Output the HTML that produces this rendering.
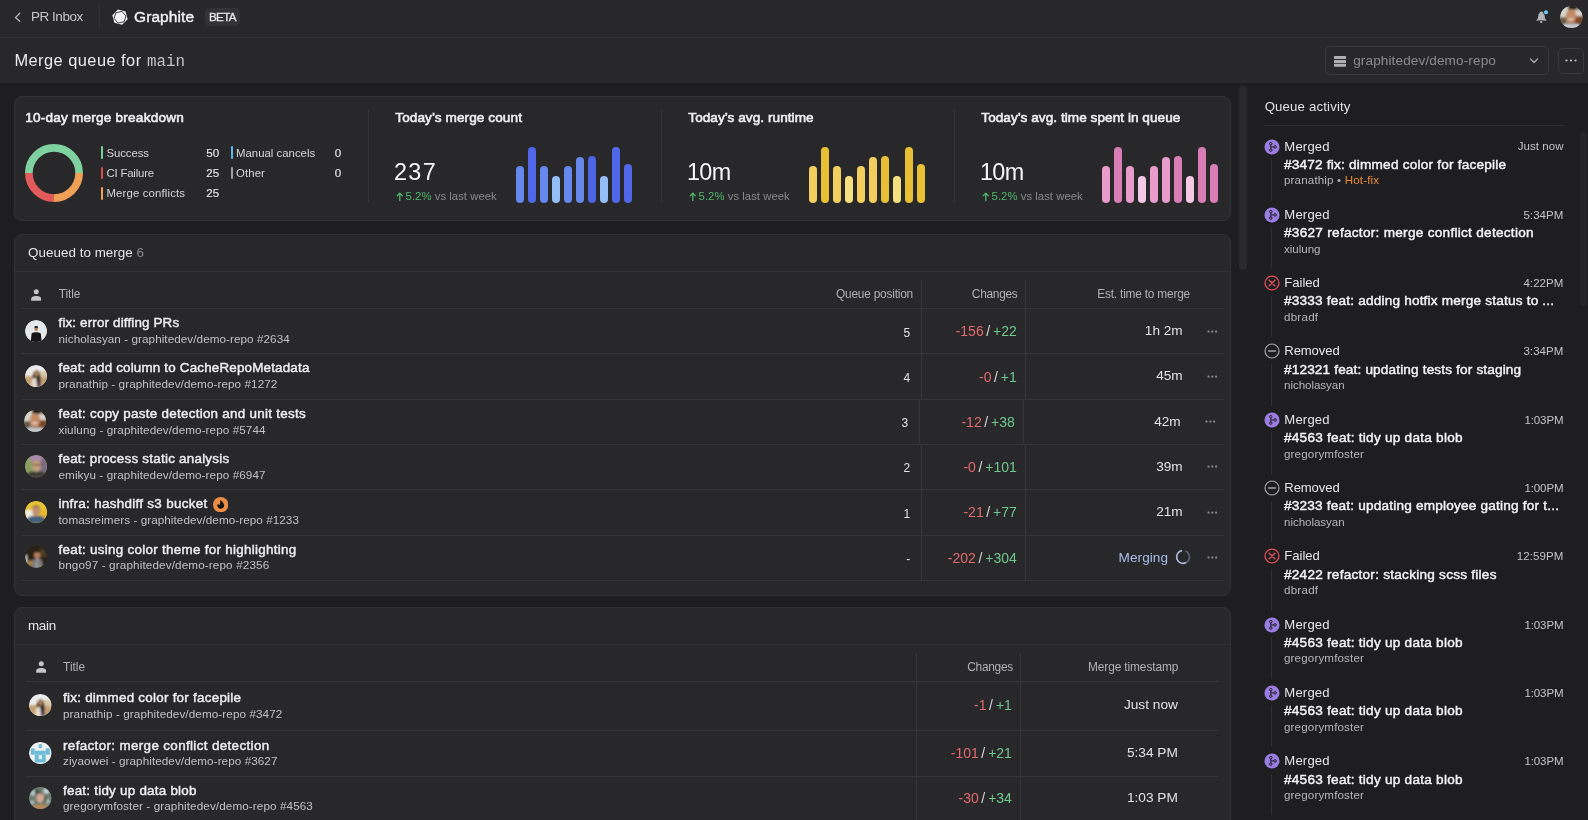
<!DOCTYPE html><html><head><meta charset="utf-8"><title>Merge queue</title><style>
*{box-sizing:border-box;margin:0;padding:0}
html,body{width:1588px;height:820px;overflow:hidden;background:#1e1e21;font-family:"Liberation Sans",sans-serif;color:#e6e6e6}
.a{position:absolute;white-space:nowrap}
.card{position:absolute;background:#28282b;border:1px solid #333337;border-radius:8px}
.vdiv{position:absolute;width:1px;background:#37373b}
.hl{position:absolute;height:1px;background:#353539}
.sb{color:#ededed;-webkit-text-stroke:0.45px #ededed}
.sub{color:#c2c2c6}
.colh{color:#b0b0b4}
.red{color:#e06a6c}.grn{color:#6dc98c}.sl{color:#d8d8d8}
.num{color:#e2e2e2}
.av{position:absolute;width:22px;height:22px;border-radius:50%;overflow:hidden}
.bar{position:absolute;width:8px;border-radius:4px}
</style></head><body><div id="root" style="position:absolute;left:0;top:0;width:1588px;height:820px;overflow:hidden;will-change:transform;background:#1e1e21">
<div class="a" style="left:0;top:0;width:1588px;height:37px;background:#28282b"></div>
<div class="a" style="left:0;top:37px;width:1588px;height:1px;background:#303034"></div>
<div class="a" style="left:0;top:38px;width:1588px;height:45px;background:#28282b"></div>
<svg class="a" style="left:13px;top:11px" width="10" height="12" viewBox="0 0 10 12"><path d="M6.8 2.2 L2.4 6.6 L6.8 10.2" fill="none" stroke="#b9b9bd" stroke-width="1.3" stroke-linecap="round" stroke-linejoin="round"/></svg>
<div class="a" style="left:30.9px;top:9.22px;line-height:16px;font-size:13.5px;letter-spacing:-0.454px;color:#c6c6ca">PR Inbox</div>
<div class="a" style="left:99px;top:5px;width:1px;height:24px;background:#333337"></div>
<svg class="a" style="left:110px;top:7px" width="20" height="20" viewBox="0 0 20 20"><polygon points="17.63,12.24 12.04,17.83 4.41,15.79 2.37,8.16 7.96,2.57 15.59,4.61" fill="#f4f4f4"/><polygon points="15.97,8.93 14.08,14.73 8.11,16.00 4.03,11.47 5.92,5.67 11.89,4.40" fill="none" stroke="#28282b" stroke-width="0.9"/></svg>
<div class="a" style="left:134px;top:8.13px;line-height:18px;font-size:15.5px;letter-spacing:0.081px;color:#f2f2f2;-webkit-text-stroke:0.4px #f2f2f2">Graphite</div>
<div class="a" style="left:205px;top:8px;width:35px;height:18px;border-radius:5px;background:#333336"></div>
<div class="a" style="left:208.9px;top:9.98px;line-height:14px;font-size:11.6px;letter-spacing:-0.605px;color:#e6e6e6;-webkit-text-stroke:0.3px #e6e6e6">BETA</div>
<svg class="a" style="left:1534px;top:9px" width="16" height="16" viewBox="0 0 16 16"><path d="M7.4 2.2 C5.2 3.2 4.3 5.2 4.2 7.4 C4.1 9.3 3.4 10.4 1.6 11.8 C4.8 10.9 9.6 10.9 12.8 12 C11.3 10.5 10.9 9 10.8 7.4 C10.6 4.8 9.6 3 7.4 2.2Z" fill="#b6b6ba"/><circle cx="7.2" cy="12.9" r="1.15" fill="#b6b6ba"/><circle cx="12" cy="3.3" r="2.7" fill="#28282b"/><circle cx="12" cy="3.3" r="2.05" fill="#6cc8f4"/></svg>
<div class="av" style="left:1560px;top:5.5px;width:22.5px;height:22.5px"><svg width="22.5" height="22.5" viewBox="0 0 22 22"><defs><clipPath id="c1"><circle cx="11" cy="11" r="11"/></clipPath><filter id="blr1" x="-20%" y="-20%" width="140%" height="140%"><feGaussianBlur stdDeviation="1.0"/></filter></defs><g clip-path="url(#c1)"><rect width="22.5" height="22.5" fill="#8a8070"/><g filter="url(#blr1)"><rect x="0" y="0" width="9" height="12" fill="#d6d6cc"/><rect x="8" y="-2" width="8" height="6" fill="#141210"/><rect x="14" y="4" width="10" height="7" fill="#d8d4cc"/><rect x="14" y="10" width="10" height="12" fill="#7a4424"/><rect x="0" y="11" width="6" height="8" fill="#6a5a40"/><ellipse cx="10.8" cy="10" rx="5.2" ry="7" fill="#c48a64"/><ellipse cx="10.5" cy="13" rx="3" ry="1.1" fill="#e8d0c0"/><path d="M0 22 C2 17 6 16.5 11 18 C16 16.5 20 17 22 22Z" fill="#c8ccd2"/></g></g></svg></div>
<div class="a" style="left:14.4px;top:51.12px;line-height:18px;font-size:16.4px;letter-spacing:0.461px;color:#ebebeb">Merge queue for</div>
<div class="a" style="left:147px;top:52.59px;line-height:18px;font-size:15.8px;letter-spacing:0.020px;font-family:'Liberation Mono',monospace;color:#c4c4c8">main</div>
<div class="a" style="left:1325px;top:46px;width:224px;height:29px;border:1px solid #3a3a3e;border-radius:5px"></div>
<svg class="a" style="left:1334px;top:55.5px" width="12" height="11" viewBox="0 0 12 11"><rect x="0" y="0" width="12" height="3" rx="0.6" fill="#b0b0b4"/><rect x="0" y="4" width="12" height="3" rx="0.6" fill="#b0b0b4"/><rect x="0" y="7.8" width="12" height="3" rx="0.6" fill="#b0b0b4"/></svg>
<div class="a" style="left:1353.2px;top:51.89px;line-height:17px;font-size:13.6px;letter-spacing:0.107px;color:#8c8c90">graphitedev/demo-repo</div>
<svg class="a" style="left:1529px;top:57px" width="10" height="8" viewBox="0 0 10 8"><path d="M1.5 2 L5 5.5 L8.5 2" fill="none" stroke="#a8a8ac" stroke-width="1.4" stroke-linecap="round" stroke-linejoin="round"/></svg>
<div class="a" style="left:1558px;top:48px;width:26px;height:26px;border:1px solid #3a3a3e;border-radius:5px"></div>
<svg class="a" style="left:1565px;top:58px" width="12" height="5" viewBox="0 0 12 5"><circle cx="1.5" cy="2.5" r="1.1" fill="#c0c0c4"/><circle cx="6" cy="2.5" r="1.1" fill="#c0c0c4"/><circle cx="10.5" cy="2.5" r="1.1" fill="#c0c0c4"/></svg>
<div class="a" style="left:1238.5px;top:86px;width:8px;height:184px;border-radius:4px;background:#2a2a2d"></div>
<div class="a" style="left:1580px;top:132px;width:7px;height:174px;border-radius:4px;background:#262629"></div>
<div class="card" style="left:14px;top:96px;width:1217px;height:125px"></div>
<div class="a sb" style="left:25.2px;top:110.39px;line-height:16px;font-size:13.6px;letter-spacing:0.211px;-webkit-text-stroke:0.6px #ededed">10-day merge breakdown</div>
<svg class="a" style="left:24px;top:143px" width="60" height="60" viewBox="0 0 60 60"><path d="M4.85 30 A25.15 25.15 0 0 1 55.15 30" fill="none" stroke="#7fd1a0" stroke-width="7.7"/><path d="M55.15 30 A25.15 25.15 0 0 1 30 55.15" fill="none" stroke="#eea055" stroke-width="7.7"/><path d="M30 55.15 A25.15 25.15 0 0 1 4.85 30" fill="none" stroke="#e35a5a" stroke-width="7.7"/></svg>
<div class="a" style="left:101.2px;top:146.30px;width:2.1px;height:12.7px;background:#72d09a;border-radius:1px"></div>
<div class="a" style="left:106.5px;top:145.85px;line-height:14px;font-size:11.4px;letter-spacing:-0.095px;color:#d6d6da">Success</div>
<div class="a" style="right:1368.90px;top:145.78px;line-height:14px;font-size:11.6px;color:#e2e2e6;-webkit-text-stroke:0.15px #e2e2e6">50</div>
<div class="a" style="left:101.2px;top:166.75px;width:2.1px;height:12.7px;background:#e04b4b;border-radius:1px"></div>
<div class="a" style="left:106.5px;top:166.00px;line-height:14px;font-size:11.4px;letter-spacing:-0.198px;color:#d6d6da">CI Failure</div>
<div class="a" style="right:1368.90px;top:165.93px;line-height:14px;font-size:11.6px;color:#e2e2e6;-webkit-text-stroke:0.15px #e2e2e6">25</div>
<div class="a" style="left:101.2px;top:187.20px;width:2.1px;height:12.7px;background:#efa052;border-radius:1px"></div>
<div class="a" style="left:106.5px;top:186.15px;line-height:14px;font-size:11.4px;letter-spacing:0.133px;color:#d6d6da">Merge conflicts</div>
<div class="a" style="right:1368.90px;top:186.08px;line-height:14px;font-size:11.6px;color:#e2e2e6;-webkit-text-stroke:0.15px #e2e2e6">25</div>
<div class="a" style="left:230.7px;top:146.30px;width:2.1px;height:12.7px;background:#5bb8e8;border-radius:1px"></div>
<div class="a" style="left:236.0px;top:145.85px;line-height:14px;font-size:11.4px;letter-spacing:0.003px;color:#d6d6da">Manual cancels</div>
<div class="a" style="right:1246.70px;top:145.78px;line-height:14px;font-size:11.6px;color:#e2e2e6;-webkit-text-stroke:0.15px #e2e2e6">0</div>
<div class="a" style="left:230.7px;top:166.75px;width:2.1px;height:12.7px;background:#a0a0a4;border-radius:1px"></div>
<div class="a" style="left:236.0px;top:166.00px;line-height:14px;font-size:11.4px;letter-spacing:0.100px;color:#d6d6da">Other</div>
<div class="a" style="right:1246.70px;top:165.93px;line-height:14px;font-size:11.6px;color:#e2e2e6;-webkit-text-stroke:0.15px #e2e2e6">0</div>
<div class="vdiv" style="left:368px;top:110px;height:92px;background:#333337"></div>
<div class="vdiv" style="left:661px;top:110px;height:92px;background:#333337"></div>
<div class="vdiv" style="left:954px;top:110px;height:92px;background:#333337"></div>
<div class="a sb" style="left:395.3px;top:110.39px;line-height:16px;font-size:13.6px;letter-spacing:0.080px;-webkit-text-stroke:0.6px #ededed">Today’s merge count</div>
<div class="a" style="left:394px;top:158.89px;line-height:26px;font-size:23.4px;letter-spacing:1.323px;color:#f4f4f4">237</div>
<svg class="a" style="left:396px;top:191.5px" width="8" height="9.5" viewBox="0 0 8 9.5"><path d="M3.8 9.2 V1.2 M0.9 4.1 L3.8 1.2 L6.7 4.1" fill="none" stroke="#4fb76b" stroke-width="1.3"/></svg>
<div class="a" style="left:405.6px;top:189.18px;line-height:14px;font-size:11.3px;letter-spacing:0.046px;"><span style="color:#4fb76b">5.2%</span> <span style="color:#8a8a8e">vs last week</span></div>
<div class="bar" style="left:516px;top:166px;height:37px;background:#6688ec"></div>
<div class="bar" style="left:528px;top:147px;height:56px;background:#4f67e8"></div>
<div class="bar" style="left:540px;top:166px;height:37px;background:#6688ec"></div>
<div class="bar" style="left:552px;top:176px;height:27px;background:#94bef8"></div>
<div class="bar" style="left:564px;top:166px;height:37px;background:#6688ec"></div>
<div class="bar" style="left:576px;top:157px;height:46px;background:#6688ec"></div>
<div class="bar" style="left:588px;top:156px;height:47px;background:#4c63e2"></div>
<div class="bar" style="left:600px;top:176px;height:27px;background:#94bef8"></div>
<div class="bar" style="left:612px;top:147px;height:56px;background:#4f67e8"></div>
<div class="bar" style="left:624px;top:164px;height:39px;background:#4f67e8"></div>
<div class="a sb" style="left:688.3px;top:110.39px;line-height:16px;font-size:13.6px;letter-spacing:0.044px;-webkit-text-stroke:0.6px #ededed">Today’s avg. runtime</div>
<div class="a" style="left:687px;top:158.89px;line-height:26px;font-size:23.4px;letter-spacing:-0.639px;color:#f4f4f4">10m</div>
<svg class="a" style="left:689px;top:191.5px" width="8" height="9.5" viewBox="0 0 8 9.5"><path d="M3.8 9.2 V1.2 M0.9 4.1 L3.8 1.2 L6.7 4.1" fill="none" stroke="#4fb76b" stroke-width="1.3"/></svg>
<div class="a" style="left:698.6px;top:189.18px;line-height:14px;font-size:11.3px;letter-spacing:0.046px;"><span style="color:#4fb76b">5.2%</span> <span style="color:#8a8a8e">vs last week</span></div>
<div class="bar" style="left:809px;top:166px;height:37px;background:#f3cd5e"></div>
<div class="bar" style="left:821px;top:147px;height:56px;background:#e8bf35"></div>
<div class="bar" style="left:833px;top:166px;height:37px;background:#f3cd5e"></div>
<div class="bar" style="left:845px;top:176px;height:27px;background:#f7e07e"></div>
<div class="bar" style="left:857px;top:166px;height:37px;background:#f3cd5e"></div>
<div class="bar" style="left:869px;top:157px;height:46px;background:#f3cd5e"></div>
<div class="bar" style="left:881px;top:156px;height:47px;background:#e8bf35"></div>
<div class="bar" style="left:893px;top:176px;height:27px;background:#f7e07e"></div>
<div class="bar" style="left:905px;top:147px;height:56px;background:#e8bf35"></div>
<div class="bar" style="left:917px;top:164px;height:39px;background:#e8bf35"></div>
<div class="a sb" style="left:981.3px;top:110.39px;line-height:16px;font-size:13.6px;letter-spacing:0.042px;-webkit-text-stroke:0.6px #ededed">Today’s avg. time spent in queue</div>
<div class="a" style="left:980px;top:158.89px;line-height:26px;font-size:23.4px;letter-spacing:-0.639px;color:#f4f4f4">10m</div>
<svg class="a" style="left:982px;top:191.5px" width="8" height="9.5" viewBox="0 0 8 9.5"><path d="M3.8 9.2 V1.2 M0.9 4.1 L3.8 1.2 L6.7 4.1" fill="none" stroke="#4fb76b" stroke-width="1.3"/></svg>
<div class="a" style="left:991.6px;top:189.18px;line-height:14px;font-size:11.3px;letter-spacing:0.046px;"><span style="color:#4fb76b">5.2%</span> <span style="color:#8a8a8e">vs last week</span></div>
<div class="bar" style="left:1102px;top:166px;height:37px;background:#e79ccb"></div>
<div class="bar" style="left:1114px;top:147px;height:56px;background:#d97db6"></div>
<div class="bar" style="left:1126px;top:166px;height:37px;background:#e79ccb"></div>
<div class="bar" style="left:1138px;top:176px;height:27px;background:#f5c9e6"></div>
<div class="bar" style="left:1150px;top:166px;height:37px;background:#e79ccb"></div>
<div class="bar" style="left:1162px;top:157px;height:46px;background:#e79ccb"></div>
<div class="bar" style="left:1174px;top:156px;height:47px;background:#d97db6"></div>
<div class="bar" style="left:1186px;top:176px;height:27px;background:#f5c9e6"></div>
<div class="bar" style="left:1198px;top:147px;height:56px;background:#d97db6"></div>
<div class="bar" style="left:1210px;top:164px;height:39px;background:#d97db6"></div>
<div class="card" style="left:14px;top:234px;width:1217px;height:362px"></div>
<div class="a" style="left:28.1px;top:244.76px;line-height:16px;font-size:13.4px;letter-spacing:0.030px;color:#e4e4e8">Queued to merge <span style="color:#88888c">6</span></div>
<div class="hl" style="left:15px;top:271px;width:1215px;background:#333337"></div>
<svg class="a" style="left:30.8px;top:288.5px" width="10.5" height="12" viewBox="0 0 10.5 12"><circle cx="5.25" cy="2.7" r="2.5" fill="#c4c4c8"/><path d="M0.2 11.7 L0.2 10 C0.2 7.6 2.5 6.9 5.25 6.9 C8 6.9 10.3 7.6 10.3 10 L10.3 11.7Z" fill="#c4c4c8"/></svg>
<div class="a colh" style="left:58.8px;top:287.08px;line-height:14px;font-size:11.9px;letter-spacing:-0.126px;">Title</div>
<div class="a colh" style="right:675.00px;top:287.08px;line-height:14px;font-size:11.9px;letter-spacing:-0.214px;">Queue position</div>
<div class="a colh" style="right:570.50px;top:287.08px;line-height:14px;font-size:11.9px;letter-spacing:-0.273px;">Changes</div>
<div class="a colh" style="right:398.00px;top:287.08px;line-height:14px;font-size:11.9px;letter-spacing:-0.210px;">Est. time to merge</div>
<div class="vdiv" style="left:921px;top:280px;height:28px"></div><div class="vdiv" style="left:1025px;top:280px;height:28px"></div>
<div class="hl" style="left:21px;top:308px;width:1203px"></div>
<div class="av" style="left:24.8px;top:319.5px;width:22.4px;height:22.4px"><svg width="22.4" height="22.4" viewBox="0 0 22 22"><defs><clipPath id="c2"><circle cx="11" cy="11" r="11"/></clipPath><filter id="blr2" x="-20%" y="-20%" width="140%" height="140%"><feGaussianBlur stdDeviation="0.6"/></filter></defs><g clip-path="url(#c2)"><rect width="22.4" height="22.4" fill="#e6e7e9"/><g filter="url(#blr2)"><ellipse cx="11" cy="8.6" rx="1.8" ry="2.2" fill="#b08868"/><ellipse cx="11" cy="7" rx="1.9" ry="1" fill="#201a18"/><path d="M5.5 22 L6.5 13.5 C7.5 11.5 14.5 11.5 15.5 13.5 L16.5 22Z" fill="#121212"/></g></g></svg></div>
<div class="a sb" style="left:58.5px;top:315.16px;line-height:16px;font-size:13.4px;letter-spacing:0.157px;">fix: error diffing PRs</div>
<div class="a sub" style="left:58.5px;top:331.95px;line-height:14px;font-size:11.7px;letter-spacing:0.063px;">nicholasyan - graphitedev/demo-repo #2634</div>
<div class="a num" style="right:677.80px;top:324.54px;line-height:16px;font-size:12px;">5</div>
<div class="a num" style="right:571.20px;top:323.25px;line-height:16px;font-size:14px;"><span class="red">-156</span><span class="sl" style="margin:0 3px 0 2.5px">/</span><span class="grn">+22</span></div>
<div class="a num" style="right:405.40px;top:323.19px;line-height:16px;font-size:13.6px;">1h 2m</div>
<svg class="a" style="left:1207.3px;top:329.5px" width="11" height="3" viewBox="0 0 11 3"><rect x="0.5" y="0.5" width="2" height="2" rx="0.6" fill="#8a8a8e"/><rect x="4.3" y="0.5" width="2" height="2" rx="0.6" fill="#8a8a8e"/><rect x="8.1" y="0.5" width="2" height="2" rx="0.6" fill="#8a8a8e"/></svg>
<div class="vdiv" style="left:921px;top:308.0px;height:45.3px"></div><div class="vdiv" style="left:1025px;top:308.0px;height:45.3px"></div>
<div class="hl" style="left:21px;top:353.3px;width:1203px"></div>
<div class="av" style="left:24.8px;top:364.8px;width:22.4px;height:22.4px"><svg width="22.4" height="22.4" viewBox="0 0 22 22"><defs><clipPath id="c3"><circle cx="11" cy="11" r="11"/></clipPath><filter id="blr3" x="-20%" y="-20%" width="140%" height="140%"><feGaussianBlur stdDeviation="0.8"/></filter></defs><g clip-path="url(#c3)"><rect width="22.4" height="22.4" fill="#ecebea"/><g filter="url(#blr3)"><rect x="0" y="11" width="22.4" height="11" fill="#c4a070"/><rect x="14" y="6" width="8" height="6" fill="#d8c8a8"/><path d="M7.5 22 C7 14 7 6 11.5 5.5 C16 6 15.5 14 15 22Z" fill="#2a2018"/><ellipse cx="11.3" cy="8.8" rx="2" ry="2.6" fill="#b88860"/><path d="M6 22 L7 14 C8 12.5 10 12.5 11 13 L12 22Z" fill="#e8e0d0"/><rect x="12" y="15" width="1.5" height="7" fill="#303080"/></g></g></svg></div>
<div class="a sb" style="left:58.5px;top:360.46px;line-height:16px;font-size:13.4px;letter-spacing:0.185px;">feat: add column to CacheRepoMetadata</div>
<div class="a sub" style="left:58.5px;top:377.25px;line-height:14px;font-size:11.7px;letter-spacing:0.082px;">pranathip - graphitedev/demo-repo #1272</div>
<div class="a num" style="right:677.80px;top:369.84px;line-height:16px;font-size:12px;">4</div>
<div class="a num" style="right:571.20px;top:368.55px;line-height:16px;font-size:14px;"><span class="red">-0</span><span class="sl" style="margin:0 3px 0 2.5px">/</span><span class="grn">+1</span></div>
<div class="a num" style="right:405.40px;top:368.49px;line-height:16px;font-size:13.6px;">45m</div>
<svg class="a" style="left:1207.3px;top:374.8px" width="11" height="3" viewBox="0 0 11 3"><rect x="0.5" y="0.5" width="2" height="2" rx="0.6" fill="#8a8a8e"/><rect x="4.3" y="0.5" width="2" height="2" rx="0.6" fill="#8a8a8e"/><rect x="8.1" y="0.5" width="2" height="2" rx="0.6" fill="#8a8a8e"/></svg>
<div class="vdiv" style="left:921px;top:353.3px;height:45.3px"></div><div class="vdiv" style="left:1025px;top:353.3px;height:45.3px"></div>
<div class="hl" style="left:21px;top:398.6px;width:1203px"></div>
<div class="av" style="left:23.8px;top:410.1px;width:22.4px;height:22.4px"><svg width="22.4" height="22.4" viewBox="0 0 22 22"><defs><clipPath id="c4"><circle cx="11" cy="11" r="11"/></clipPath><filter id="blr4" x="-20%" y="-20%" width="140%" height="140%"><feGaussianBlur stdDeviation="1.0"/></filter></defs><g clip-path="url(#c4)"><rect width="22.4" height="22.4" fill="#8a8070"/><g filter="url(#blr4)"><rect x="0" y="0" width="9" height="12" fill="#d6d6cc"/><rect x="8" y="-2" width="8" height="6" fill="#141210"/><rect x="14" y="4" width="10" height="7" fill="#d8d4cc"/><rect x="14" y="10" width="10" height="12" fill="#7a4424"/><rect x="0" y="11" width="6" height="8" fill="#6a5a40"/><ellipse cx="10.8" cy="10" rx="5.2" ry="7" fill="#c48a64"/><ellipse cx="10.5" cy="13" rx="3" ry="1.1" fill="#e8d0c0"/><path d="M0 22 C2 17 6 16.5 11 18 C16 16.5 20 17 22 22Z" fill="#c8ccd2"/></g></g></svg></div>
<div class="a sb" style="left:58.5px;top:405.76px;line-height:16px;font-size:13.4px;letter-spacing:0.278px;">feat: copy paste detection and unit tests</div>
<div class="a sub" style="left:58.5px;top:422.55px;line-height:14px;font-size:11.7px;letter-spacing:0.083px;">xiulung - graphitedev/demo-repo #5744</div>
<div class="a num" style="right:679.80px;top:415.14px;line-height:16px;font-size:12px;">3</div>
<div class="a num" style="right:573.20px;top:413.85px;line-height:16px;font-size:14px;"><span class="red">-12</span><span class="sl" style="margin:0 3px 0 2.5px">/</span><span class="grn">+38</span></div>
<div class="a num" style="right:407.40px;top:413.79px;line-height:16px;font-size:13.6px;">42m</div>
<svg class="a" style="left:1205.3px;top:420.1px" width="11" height="3" viewBox="0 0 11 3"><rect x="0.5" y="0.5" width="2" height="2" rx="0.6" fill="#8a8a8e"/><rect x="4.3" y="0.5" width="2" height="2" rx="0.6" fill="#8a8a8e"/><rect x="8.1" y="0.5" width="2" height="2" rx="0.6" fill="#8a8a8e"/></svg>
<div class="vdiv" style="left:919px;top:398.6px;height:45.3px"></div><div class="vdiv" style="left:1023px;top:398.6px;height:45.3px"></div>
<div class="hl" style="left:21px;top:443.9px;width:1203px"></div>
<div class="av" style="left:24.8px;top:455.4px;width:22.4px;height:22.4px"><svg width="22.4" height="22.4" viewBox="0 0 22 22"><defs><clipPath id="c5"><circle cx="11" cy="11" r="11"/></clipPath><filter id="blr5" x="-20%" y="-20%" width="140%" height="140%"><feGaussianBlur stdDeviation="0.9"/></filter></defs><g clip-path="url(#c5)"><rect width="22.4" height="22.4" fill="#8a8a78"/><g filter="url(#blr5)"><rect x="0" y="0" width="8" height="22.4" fill="#8aa060"/><rect x="14" y="0" width="8" height="22.4" fill="#7a6a80"/><rect x="5" y="0" width="12" height="6" fill="#a888a8"/><ellipse cx="11.3" cy="10.5" rx="4.6" ry="5.5" fill="#c8a080"/><path d="M6.5 9 C6.5 5 16 5 16 9 L15 7 C13 6 9 6 7.5 7Z" fill="#3a2a20"/><rect x="7" y="9.3" width="9" height="1" fill="#4a3a30"/><path d="M0 22 C2 16 7 15.5 11 17 C15 15.5 20 16 22 22Z" fill="#3a3a32"/></g></g></svg></div>
<div class="a sb" style="left:58.5px;top:451.06px;line-height:16px;font-size:13.4px;letter-spacing:0.247px;">feat: process static analysis</div>
<div class="a sub" style="left:58.5px;top:467.85px;line-height:14px;font-size:11.7px;letter-spacing:0.086px;">emikyu - graphitedev/demo-repo #6947</div>
<div class="a num" style="right:677.80px;top:460.44px;line-height:16px;font-size:12px;">2</div>
<div class="a num" style="right:571.20px;top:459.15px;line-height:16px;font-size:14px;"><span class="red">-0</span><span class="sl" style="margin:0 3px 0 2.5px">/</span><span class="grn">+101</span></div>
<div class="a num" style="right:405.40px;top:459.09px;line-height:16px;font-size:13.6px;">39m</div>
<svg class="a" style="left:1207.3px;top:465.4px" width="11" height="3" viewBox="0 0 11 3"><rect x="0.5" y="0.5" width="2" height="2" rx="0.6" fill="#8a8a8e"/><rect x="4.3" y="0.5" width="2" height="2" rx="0.6" fill="#8a8a8e"/><rect x="8.1" y="0.5" width="2" height="2" rx="0.6" fill="#8a8a8e"/></svg>
<div class="vdiv" style="left:921px;top:443.9px;height:45.3px"></div><div class="vdiv" style="left:1025px;top:443.9px;height:45.3px"></div>
<div class="hl" style="left:21px;top:489.2px;width:1203px"></div>
<div class="av" style="left:24.8px;top:500.7px;width:22.4px;height:22.4px"><svg width="22.4" height="22.4" viewBox="0 0 22 22"><defs><clipPath id="c6"><circle cx="11" cy="11" r="11"/></clipPath><filter id="blr6" x="-20%" y="-20%" width="140%" height="140%"><feGaussianBlur stdDeviation="0.9"/></filter></defs><g clip-path="url(#c6)"><rect width="22.4" height="22.4" fill="#e0c040"/><g filter="url(#blr6)"><rect x="0" y="0" width="22.4" height="10" fill="#e8c238"/><rect x="0" y="9" width="8" height="8" fill="#f0ece0"/><rect x="15" y="8" width="7" height="10" fill="#e8b828"/><ellipse cx="11" cy="9.5" rx="4" ry="5.3" fill="#c09070"/><path d="M7 7 C7 3.5 15 3.5 15 7 L14 5.8 C12 5 10 5 8 5.8Z" fill="#3a2a20"/><path d="M0 22 C2 15 6 14 11 15 C16 14 20 15 22 22Z" fill="#42607e"/></g></g></svg></div>
<div class="a sb" style="left:58.5px;top:496.36px;line-height:16px;font-size:13.4px;letter-spacing:0.312px;">infra: hashdiff s3 bucket</div>
<svg class="a" style="left:212.9px;top:496.7px" width="15.4" height="15.4" viewBox="0 0 15.4 15.4"><circle cx="7.7" cy="7.7" r="7.7" fill="#ec8d45"/><path d="M7.6 2.8 C8.4 4.3 11.2 5.8 11.2 8.5 C11.2 10.4 9.7 11.8 7.7 11.8 C5.7 11.8 4.3 10.4 4.3 8.6 C4.3 7.9 4.6 7.4 4.9 7.1 C5.4 7.9 6.3 8.1 6.8 7.6 C7.4 6.8 7 4.2 7.6 2.8Z" fill="#141414"/></svg>
<div class="a sub" style="left:58.5px;top:513.15px;line-height:14px;font-size:11.7px;letter-spacing:0.065px;">tomasreimers - graphitedev/demo-repo #1233</div>
<div class="a num" style="right:677.80px;top:505.74px;line-height:16px;font-size:12px;">1</div>
<div class="a num" style="right:571.20px;top:504.45px;line-height:16px;font-size:14px;"><span class="red">-21</span><span class="sl" style="margin:0 3px 0 2.5px">/</span><span class="grn">+77</span></div>
<div class="a num" style="right:405.40px;top:504.39px;line-height:16px;font-size:13.6px;">21m</div>
<svg class="a" style="left:1207.3px;top:510.7px" width="11" height="3" viewBox="0 0 11 3"><rect x="0.5" y="0.5" width="2" height="2" rx="0.6" fill="#8a8a8e"/><rect x="4.3" y="0.5" width="2" height="2" rx="0.6" fill="#8a8a8e"/><rect x="8.1" y="0.5" width="2" height="2" rx="0.6" fill="#8a8a8e"/></svg>
<div class="vdiv" style="left:921px;top:489.2px;height:45.3px"></div><div class="vdiv" style="left:1025px;top:489.2px;height:45.3px"></div>
<div class="hl" style="left:21px;top:534.5px;width:1203px"></div>
<div class="av" style="left:24.8px;top:546.0px;width:22.4px;height:22.4px"><svg width="22.4" height="22.4" viewBox="0 0 22 22"><defs><clipPath id="c7"><circle cx="11" cy="11" r="11"/></clipPath><filter id="blr7" x="-20%" y="-20%" width="140%" height="140%"><feGaussianBlur stdDeviation="0.8"/></filter></defs><g clip-path="url(#c7)"><rect width="22.4" height="22.4" fill="#2a2018"/><g filter="url(#blr7)"><rect x="0" y="0" width="22.4" height="22.4" fill="#2a2018"/><rect x="14" y="3" width="8" height="8" fill="#4a3a22"/><ellipse cx="12" cy="8.5" rx="3" ry="4" fill="#b88060"/><path d="M8.8 6.5 C9 3.5 15 3.5 15.2 6.5Z" fill="#1a1410"/><path d="M6 22 L7.5 14 C9 12 15 12 16.5 14 L18 22Z" fill="#7a7a7c"/><path d="M11 22 L11.5 13 L13 13 L13.5 22Z" fill="#e8e8e8"/><rect x="12" y="14" width="0.9" height="8" fill="#202020"/><ellipse cx="5" cy="17" rx="3" ry="3" fill="#a08048"/><rect x="0" y="9" width="2" height="8" fill="#d8d8d8"/></g></g></svg></div>
<div class="a sb" style="left:58.5px;top:541.66px;line-height:16px;font-size:13.4px;letter-spacing:0.290px;">feat: using color theme for highlighting</div>
<div class="a sub" style="left:58.5px;top:558.45px;line-height:14px;font-size:11.7px;letter-spacing:0.134px;">bngo97 - graphitedev/demo-repo #2356</div>
<div class="a num" style="right:677.80px;top:551.04px;line-height:16px;font-size:12px;">-</div>
<div class="a num" style="right:571.20px;top:549.75px;line-height:16px;font-size:14px;"><span class="red">-202</span><span class="sl" style="margin:0 3px 0 2.5px">/</span><span class="grn">+304</span></div>
<div class="a num" style="right:420.00px;top:549.89px;line-height:16px;font-size:13.6px;letter-spacing:0.039px;color:#a8bde6">Merging</div>
<svg class="a" style="left:1175px;top:548.9px" width="16" height="16" viewBox="0 0 16 16"><path d="M10.40 2.07 A6.4 6.4 0 0 1 11.20 13.54" fill="none" stroke="#5a6070" stroke-width="1.7"/><path d="M11.20 13.54 A6.4 6.4 0 1 1 7.11 1.66" fill="none" stroke="#a9b9dc" stroke-width="1.7"/></svg>
<svg class="a" style="left:1207.3px;top:556.0px" width="11" height="3" viewBox="0 0 11 3"><rect x="0.5" y="0.5" width="2" height="2" rx="0.6" fill="#8a8a8e"/><rect x="4.3" y="0.5" width="2" height="2" rx="0.6" fill="#8a8a8e"/><rect x="8.1" y="0.5" width="2" height="2" rx="0.6" fill="#8a8a8e"/></svg>
<div class="vdiv" style="left:921px;top:534.5px;height:45.3px"></div><div class="vdiv" style="left:1025px;top:534.5px;height:45.3px"></div>
<div class="hl" style="left:21px;top:579.8px;width:1203px"></div>
<div class="card" style="left:14px;top:607px;width:1217px;height:260px"></div>
<div class="a" style="left:27.9px;top:618.16px;line-height:16px;font-size:13.4px;letter-spacing:-0.233px;color:#e4e4e8">main</div>
<div class="hl" style="left:15px;top:644px;width:1215px;background:#333337"></div>
<svg class="a" style="left:35.8px;top:661px" width="10.5" height="12" viewBox="0 0 10.5 12"><circle cx="5.25" cy="2.7" r="2.5" fill="#c4c4c8"/><path d="M0.2 11.7 L0.2 10 C0.2 7.6 2.5 6.9 5.25 6.9 C8 6.9 10.3 7.6 10.3 10 L10.3 11.7Z" fill="#c4c4c8"/></svg>
<div class="a colh" style="left:63.1px;top:659.88px;line-height:14px;font-size:11.9px;letter-spacing:-0.006px;">Title</div>
<div class="a colh" style="right:575.10px;top:659.88px;line-height:14px;font-size:11.9px;letter-spacing:-0.287px;">Changes</div>
<div class="a colh" style="right:409.80px;top:659.88px;line-height:14px;font-size:11.9px;letter-spacing:-0.111px;">Merge timestamp</div>
<div class="vdiv" style="left:916px;top:653px;height:28px"></div><div class="vdiv" style="left:1020px;top:653px;height:28px"></div>
<div class="hl" style="left:26px;top:681px;width:1193px"></div>
<div class="av" style="left:29.4px;top:693.8px;width:22.4px;height:22.4px"><svg width="22.4" height="22.4" viewBox="0 0 22 22"><defs><clipPath id="c8"><circle cx="11" cy="11" r="11"/></clipPath><filter id="blr8" x="-20%" y="-20%" width="140%" height="140%"><feGaussianBlur stdDeviation="0.8"/></filter></defs><g clip-path="url(#c8)"><rect width="22.4" height="22.4" fill="#ecebea"/><g filter="url(#blr8)"><rect x="0" y="11" width="22.4" height="11" fill="#c4a070"/><rect x="14" y="6" width="8" height="6" fill="#d8c8a8"/><path d="M7.5 22 C7 14 7 6 11.5 5.5 C16 6 15.5 14 15 22Z" fill="#2a2018"/><ellipse cx="11.3" cy="8.8" rx="2" ry="2.6" fill="#b88860"/><path d="M6 22 L7 14 C8 12.5 10 12.5 11 13 L12 22Z" fill="#e8e0d0"/><rect x="12" y="15" width="1.5" height="7" fill="#303080"/></g></g></svg></div>
<div class="a sb" style="left:63px;top:689.86px;line-height:16px;font-size:13.4px;letter-spacing:0.262px;">fix: dimmed color for facepile</div>
<div class="a sub" style="left:63px;top:706.85px;line-height:14px;font-size:11.7px;letter-spacing:0.094px;">pranathip - graphitedev/demo-repo #3472</div>
<div class="a num" style="right:576.10px;top:697.15px;line-height:16px;font-size:14px;"><span class="red">-1</span><span class="sl" style="margin:0 3px 0 2.5px">/</span><span class="grn">+1</span></div>
<div class="a num" style="right:410.10px;top:697.25px;line-height:16px;font-size:13.7px;">Just now</div>
<div class="vdiv" style="left:916px;top:681.0px;height:49px"></div><div class="vdiv" style="left:1020px;top:681.0px;height:49px"></div>
<div class="hl" style="left:26px;top:730.0px;width:1193px"></div>
<div class="av" style="left:29.4px;top:741.8px;width:22.4px;height:22.4px"><svg width="22.4" height="22.4" viewBox="0 0 22 22"><circle cx="11" cy="11" r="11" fill="#eeeff0"/><rect x="9.6" y="2.1" width="3.1" height="3.8" fill="#6cbcd6"/><rect x="1.8" y="6.25" width="3.9" height="6.25" fill="#6cbcd6"/><rect x="16.4" y="6.25" width="4.1" height="6.25" fill="#6cbcd6"/><rect x="5.7" y="8.6" width="10.7" height="3.9" fill="#6cbcd6"/><rect x="5.7" y="12.5" width="10.7" height="7.6" fill="#6cbcd6"/><rect x="9.6" y="13.1" width="3.1" height="3.7" fill="#eeeff0"/></svg></div>
<div class="a sb" style="left:63px;top:737.76px;line-height:16px;font-size:13.4px;letter-spacing:0.360px;">refactor: merge conflict detection</div>
<div class="a sub" style="left:63px;top:753.95px;line-height:14px;font-size:11.7px;letter-spacing:0.071px;">ziyaowei - graphitedev/demo-repo #3627</div>
<div class="a num" style="right:576.10px;top:745.25px;line-height:16px;font-size:14px;"><span class="red">-101</span><span class="sl" style="margin:0 3px 0 2.5px">/</span><span class="grn">+21</span></div>
<div class="a num" style="right:410.10px;top:745.35px;line-height:16px;font-size:13.7px;">5:34 PM</div>
<div class="vdiv" style="left:916px;top:730.0px;height:45.6px"></div><div class="vdiv" style="left:1020px;top:730.0px;height:45.6px"></div>
<div class="hl" style="left:26px;top:775.6px;width:1193px"></div>
<div class="av" style="left:29.4px;top:786.8px;width:22.4px;height:22.4px"><svg width="22.4" height="22.4" viewBox="0 0 22 22"><defs><clipPath id="c10"><circle cx="11" cy="11" r="11"/></clipPath><filter id="blr10" x="-20%" y="-20%" width="140%" height="140%"><feGaussianBlur stdDeviation="0.8"/></filter></defs><g clip-path="url(#c10)"><rect width="22.4" height="22.4" fill="#708070"/><g filter="url(#blr10)"><rect x="0" y="0" width="22.4" height="22.4" fill="#6a7a6a"/><circle cx="4" cy="6" r="2.5" fill="#b8c8d0"/><circle cx="17" cy="4" r="3" fill="#c0d0d8"/><circle cx="18" cy="14" r="2.5" fill="#a8b8b8"/><circle cx="3" cy="15" r="2" fill="#b0c0c8"/><rect x="6" y="3" width="4" height="6" fill="#3a4a38"/><rect x="14" y="9" width="3" height="6" fill="#3a4a38"/><ellipse cx="11" cy="10.5" rx="4" ry="5" fill="#d0a898"/><path d="M7 8.5 C7 4.5 15 4.5 15 8.5 L14 6.8 C12 6 10 6 8 6.8Z" fill="#3a2a20"/><path d="M1 22 C2 18 6 17.5 11 17 C16 17.5 20 18 21 22Z" fill="#b88858"/></g></g></svg></div>
<div class="a sb" style="left:63px;top:782.66px;line-height:16px;font-size:13.4px;letter-spacing:0.245px;">feat: tidy up data blob</div>
<div class="a sub" style="left:63px;top:798.95px;line-height:14px;font-size:11.7px;letter-spacing:0.100px;">gregorymfoster - graphitedev/demo-repo #4563</div>
<div class="a num" style="right:576.10px;top:790.15px;line-height:16px;font-size:14px;"><span class="red">-30</span><span class="sl" style="margin:0 3px 0 2.5px">/</span><span class="grn">+34</span></div>
<div class="a num" style="right:410.10px;top:790.25px;line-height:16px;font-size:13.7px;">1:03 PM</div>
<div class="vdiv" style="left:916px;top:775.6px;height:45.6px"></div><div class="vdiv" style="left:1020px;top:775.6px;height:45.6px"></div>
<div class="hl" style="left:26px;top:821.2px;width:1193px"></div>
<div class="a" style="left:1264.7px;top:98.73px;line-height:16px;font-size:13.2px;letter-spacing:0.167px;color:#e2e2e6">Queue activity</div>
<div class="hl" style="left:1264px;top:125px;width:300px;background:#2e2e32"></div>
<div class="a" style="left:1263.6px;top:138.5px;width:16px;height:16px"><svg width="16" height="16" viewBox="0 0 16 16"><circle cx="8" cy="8" r="7.55" fill="#9a7de2"/><g fill="none" stroke="#1e1e21" stroke-width="1"><circle cx="6.8" cy="4.7" r="1.25"/><circle cx="6.8" cy="11.1" r="1.25"/><circle cx="11.1" cy="7.9" r="1.25"/><path d="M6.8 5.9 V9.9 M6.8 7.9 H9.9"/></g></svg></div>
<div class="a" style="left:1271px;top:159.0px;width:1px;height:41.7px;background:#313135"></div>
<div class="a" style="left:1284.3px;top:138.56px;line-height:16px;font-size:13.1px;letter-spacing:0.182px;color:#e4e4e8">Merged</div>
<div class="a" style="right:24.50px;top:139.42px;line-height:14px;font-size:11.5px;letter-spacing:0.039px;color:#c4c4c8">Just now</div>
<div class="a sb" style="left:1284px;top:156.89px;line-height:16px;font-size:13.6px;letter-spacing:0.211px;color:#f2f2f2;-webkit-text-stroke:0.45px #f2f2f2">#3472 fix: dimmed color for facepile</div>
<div class="a" style="left:1284px;top:173.38px;line-height:14px;font-size:11.6px;letter-spacing:0.150px;color:#b6b6ba">pranathip • <span style="color:#ec8a3a">Hot-fix</span></div>
<div class="a" style="left:1263.6px;top:206.8px;width:16px;height:16px"><svg width="16" height="16" viewBox="0 0 16 16"><circle cx="8" cy="8" r="7.55" fill="#9a7de2"/><g fill="none" stroke="#1e1e21" stroke-width="1"><circle cx="6.8" cy="4.7" r="1.25"/><circle cx="6.8" cy="11.1" r="1.25"/><circle cx="11.1" cy="7.9" r="1.25"/><path d="M6.8 5.9 V9.9 M6.8 7.9 H9.9"/></g></svg></div>
<div class="a" style="left:1271px;top:227.3px;width:1px;height:41.7px;background:#313135"></div>
<div class="a" style="left:1284.3px;top:206.86px;line-height:16px;font-size:13.1px;letter-spacing:0.182px;color:#e4e4e8">Merged</div>
<div class="a" style="right:24.50px;top:207.72px;line-height:14px;font-size:11.5px;letter-spacing:0.077px;color:#c4c4c8">5:34PM</div>
<div class="a sb" style="left:1284px;top:225.19px;line-height:16px;font-size:13.6px;letter-spacing:0.278px;color:#f2f2f2;-webkit-text-stroke:0.45px #f2f2f2">#3627 refactor: merge conflict detection</div>
<div class="a" style="left:1284px;top:241.68px;line-height:14px;font-size:11.6px;letter-spacing:-0.036px;color:#b6b6ba">xiulung</div>
<div class="a" style="left:1263.6px;top:275.1px;width:16px;height:16px"><svg width="16" height="16" viewBox="0 0 16 16"><circle cx="8" cy="8" r="6.95" fill="none" stroke="#e0505a" stroke-width="1.3"/><path d="M5.2 5.2 L10.8 10.8 M10.8 5.2 L5.2 10.8" stroke="#e0505a" stroke-width="1.4" stroke-linecap="round"/></svg></div>
<div class="a" style="left:1271px;top:295.6px;width:1px;height:41.7px;background:#313135"></div>
<div class="a" style="left:1284.3px;top:275.16px;line-height:16px;font-size:13.1px;letter-spacing:-0.012px;color:#e4e4e8">Failed</div>
<div class="a" style="right:24.50px;top:276.02px;line-height:14px;font-size:11.5px;letter-spacing:0.077px;color:#c4c4c8">4:22PM</div>
<div class="a sb" style="left:1284px;top:293.49px;line-height:16px;font-size:13.6px;letter-spacing:0.196px;color:#f2f2f2;-webkit-text-stroke:0.45px #f2f2f2">#3333 feat: adding hotfix merge status to ...</div>
<div class="a" style="left:1284px;top:309.98px;line-height:14px;font-size:11.6px;letter-spacing:0.237px;color:#b6b6ba">dbradf</div>
<div class="a" style="left:1263.6px;top:343.4px;width:16px;height:16px"><svg width="16" height="16" viewBox="0 0 16 16"><circle cx="8" cy="8" r="7" fill="none" stroke="#a4a4a8" stroke-width="1.2"/><path d="M4.6 8 H11.6" stroke="#a4a4a8" stroke-width="1.3" stroke-linecap="round"/></svg></div>
<div class="a" style="left:1271px;top:363.9px;width:1px;height:41.7px;background:#313135"></div>
<div class="a" style="left:1284.3px;top:343.46px;line-height:16px;font-size:13.1px;letter-spacing:-0.107px;color:#e4e4e8">Removed</div>
<div class="a" style="right:24.50px;top:344.32px;line-height:14px;font-size:11.5px;letter-spacing:0.077px;color:#c4c4c8">3:34PM</div>
<div class="a sb" style="left:1284px;top:361.79px;line-height:16px;font-size:13.6px;letter-spacing:0.155px;color:#f2f2f2;-webkit-text-stroke:0.45px #f2f2f2">#12321 feat: updating tests for staging</div>
<div class="a" style="left:1284px;top:378.28px;line-height:14px;font-size:11.6px;letter-spacing:-0.058px;color:#b6b6ba">nicholasyan</div>
<div class="a" style="left:1263.6px;top:411.7px;width:16px;height:16px"><svg width="16" height="16" viewBox="0 0 16 16"><circle cx="8" cy="8" r="7.55" fill="#9a7de2"/><g fill="none" stroke="#1e1e21" stroke-width="1"><circle cx="6.8" cy="4.7" r="1.25"/><circle cx="6.8" cy="11.1" r="1.25"/><circle cx="11.1" cy="7.9" r="1.25"/><path d="M6.8 5.9 V9.9 M6.8 7.9 H9.9"/></g></svg></div>
<div class="a" style="left:1271px;top:432.2px;width:1px;height:41.7px;background:#313135"></div>
<div class="a" style="left:1284.3px;top:411.76px;line-height:16px;font-size:13.1px;letter-spacing:0.182px;color:#e4e4e8">Merged</div>
<div class="a" style="right:24.50px;top:412.62px;line-height:14px;font-size:11.5px;letter-spacing:-0.090px;color:#c4c4c8">1:03PM</div>
<div class="a sb" style="left:1284px;top:430.09px;line-height:16px;font-size:13.6px;letter-spacing:0.249px;color:#f2f2f2;-webkit-text-stroke:0.45px #f2f2f2">#4563 feat: tidy up data blob</div>
<div class="a" style="left:1284px;top:446.58px;line-height:14px;font-size:11.6px;letter-spacing:0.145px;color:#b6b6ba">gregorymfoster</div>
<div class="a" style="left:1263.6px;top:480.0px;width:16px;height:16px"><svg width="16" height="16" viewBox="0 0 16 16"><circle cx="8" cy="8" r="7" fill="none" stroke="#a4a4a8" stroke-width="1.2"/><path d="M4.6 8 H11.6" stroke="#a4a4a8" stroke-width="1.3" stroke-linecap="round"/></svg></div>
<div class="a" style="left:1271px;top:500.5px;width:1px;height:41.7px;background:#313135"></div>
<div class="a" style="left:1284.3px;top:480.06px;line-height:16px;font-size:13.1px;letter-spacing:-0.107px;color:#e4e4e8">Removed</div>
<div class="a" style="right:24.50px;top:480.92px;line-height:14px;font-size:11.5px;letter-spacing:-0.090px;color:#c4c4c8">1:00PM</div>
<div class="a sb" style="left:1284px;top:498.39px;line-height:16px;font-size:13.6px;letter-spacing:0.204px;color:#f2f2f2;-webkit-text-stroke:0.45px #f2f2f2">#3233 feat: updating employee gating for t...</div>
<div class="a" style="left:1284px;top:514.88px;line-height:14px;font-size:11.6px;letter-spacing:-0.058px;color:#b6b6ba">nicholasyan</div>
<div class="a" style="left:1263.6px;top:548.3px;width:16px;height:16px"><svg width="16" height="16" viewBox="0 0 16 16"><circle cx="8" cy="8" r="6.95" fill="none" stroke="#e0505a" stroke-width="1.3"/><path d="M5.2 5.2 L10.8 10.8 M10.8 5.2 L5.2 10.8" stroke="#e0505a" stroke-width="1.4" stroke-linecap="round"/></svg></div>
<div class="a" style="left:1271px;top:568.8px;width:1px;height:41.7px;background:#313135"></div>
<div class="a" style="left:1284.3px;top:548.36px;line-height:16px;font-size:13.1px;letter-spacing:-0.012px;color:#e4e4e8">Failed</div>
<div class="a" style="right:24.50px;top:549.22px;line-height:14px;font-size:11.5px;letter-spacing:0.096px;color:#c4c4c8">12:59PM</div>
<div class="a sb" style="left:1284px;top:566.69px;line-height:16px;font-size:13.6px;letter-spacing:0.249px;color:#f2f2f2;-webkit-text-stroke:0.45px #f2f2f2">#2422 refactor: stacking scss files</div>
<div class="a" style="left:1284px;top:583.18px;line-height:14px;font-size:11.6px;letter-spacing:0.237px;color:#b6b6ba">dbradf</div>
<div class="a" style="left:1263.6px;top:616.6px;width:16px;height:16px"><svg width="16" height="16" viewBox="0 0 16 16"><circle cx="8" cy="8" r="7.55" fill="#9a7de2"/><g fill="none" stroke="#1e1e21" stroke-width="1"><circle cx="6.8" cy="4.7" r="1.25"/><circle cx="6.8" cy="11.1" r="1.25"/><circle cx="11.1" cy="7.9" r="1.25"/><path d="M6.8 5.9 V9.9 M6.8 7.9 H9.9"/></g></svg></div>
<div class="a" style="left:1271px;top:637.1px;width:1px;height:41.7px;background:#313135"></div>
<div class="a" style="left:1284.3px;top:616.66px;line-height:16px;font-size:13.1px;letter-spacing:0.182px;color:#e4e4e8">Merged</div>
<div class="a" style="right:24.50px;top:617.52px;line-height:14px;font-size:11.5px;letter-spacing:-0.090px;color:#c4c4c8">1:03PM</div>
<div class="a sb" style="left:1284px;top:634.99px;line-height:16px;font-size:13.6px;letter-spacing:0.249px;color:#f2f2f2;-webkit-text-stroke:0.45px #f2f2f2">#4563 feat: tidy up data blob</div>
<div class="a" style="left:1284px;top:651.48px;line-height:14px;font-size:11.6px;letter-spacing:0.145px;color:#b6b6ba">gregorymfoster</div>
<div class="a" style="left:1263.6px;top:684.9px;width:16px;height:16px"><svg width="16" height="16" viewBox="0 0 16 16"><circle cx="8" cy="8" r="7.55" fill="#9a7de2"/><g fill="none" stroke="#1e1e21" stroke-width="1"><circle cx="6.8" cy="4.7" r="1.25"/><circle cx="6.8" cy="11.1" r="1.25"/><circle cx="11.1" cy="7.9" r="1.25"/><path d="M6.8 5.9 V9.9 M6.8 7.9 H9.9"/></g></svg></div>
<div class="a" style="left:1271px;top:705.4px;width:1px;height:41.7px;background:#313135"></div>
<div class="a" style="left:1284.3px;top:684.96px;line-height:16px;font-size:13.1px;letter-spacing:0.182px;color:#e4e4e8">Merged</div>
<div class="a" style="right:24.50px;top:685.82px;line-height:14px;font-size:11.5px;letter-spacing:-0.090px;color:#c4c4c8">1:03PM</div>
<div class="a sb" style="left:1284px;top:703.29px;line-height:16px;font-size:13.6px;letter-spacing:0.249px;color:#f2f2f2;-webkit-text-stroke:0.45px #f2f2f2">#4563 feat: tidy up data blob</div>
<div class="a" style="left:1284px;top:719.78px;line-height:14px;font-size:11.6px;letter-spacing:0.145px;color:#b6b6ba">gregorymfoster</div>
<div class="a" style="left:1263.6px;top:753.2px;width:16px;height:16px"><svg width="16" height="16" viewBox="0 0 16 16"><circle cx="8" cy="8" r="7.55" fill="#9a7de2"/><g fill="none" stroke="#1e1e21" stroke-width="1"><circle cx="6.8" cy="4.7" r="1.25"/><circle cx="6.8" cy="11.1" r="1.25"/><circle cx="11.1" cy="7.9" r="1.25"/><path d="M6.8 5.9 V9.9 M6.8 7.9 H9.9"/></g></svg></div>
<div class="a" style="left:1271px;top:773.7px;width:1px;height:41.7px;background:#313135"></div>
<div class="a" style="left:1284.3px;top:753.26px;line-height:16px;font-size:13.1px;letter-spacing:0.182px;color:#e4e4e8">Merged</div>
<div class="a" style="right:24.50px;top:754.12px;line-height:14px;font-size:11.5px;letter-spacing:-0.090px;color:#c4c4c8">1:03PM</div>
<div class="a sb" style="left:1284px;top:771.59px;line-height:16px;font-size:13.6px;letter-spacing:0.249px;color:#f2f2f2;-webkit-text-stroke:0.45px #f2f2f2">#4563 feat: tidy up data blob</div>
<div class="a" style="left:1284px;top:788.08px;line-height:14px;font-size:11.6px;letter-spacing:0.145px;color:#b6b6ba">gregorymfoster</div>
</div></body></html>
